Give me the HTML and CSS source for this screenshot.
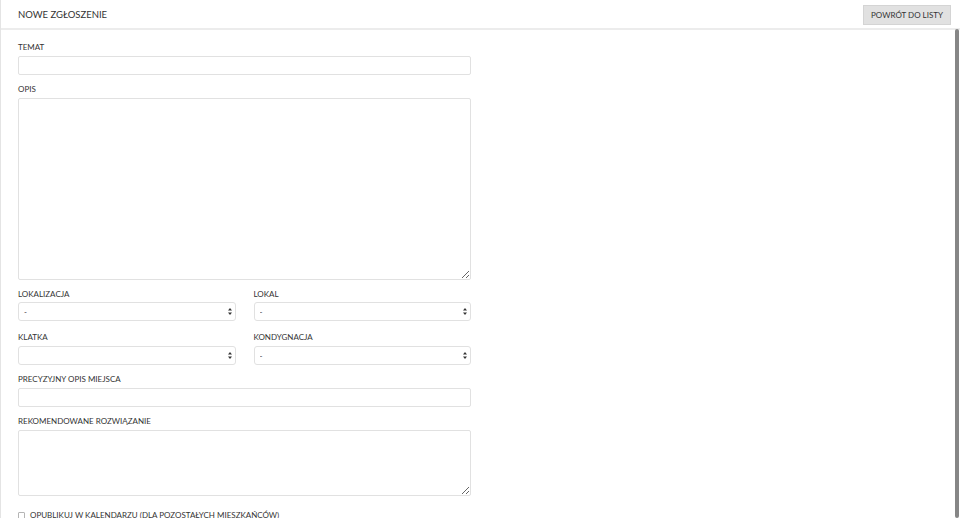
FILE: index.html
```html
<!DOCTYPE html>
<html lang="pl">
<head>
<meta charset="utf-8">
<title>Nowe zgłoszenie</title>
<link rel="stylesheet" href="styles.css">
</head>
<body>
<div class="app">
  <header class="topbar">
    <h1 class="title">NOWE ZGŁOSZENIE</h1>
    <button class="btn-back" type="button">POWRÓT DO LISTY</button>
  </header>
  <main class="content">
    <form class="form">
      <div class="field">
        <label class="label">TEMAT</label>
        <input class="input" type="text">
      </div>
      <div class="field">
        <label class="label">OPIS</label>
        <textarea class="input textarea textarea-lg"></textarea>
      </div>
      <div class="row row-first">
        <div class="field">
          <label class="label label-tight">LOKALIZACJA</label>
          <div class="select-wrap">
            <select class="input select"><option>-</option></select>
            <svg class="select-arrow" viewBox="0 0 4 7" width="4" height="7"><path d="M2 0 L4 2.6 L0 2.6 Z M0 4.4 L4 4.4 L2 7 Z" fill="#333"/></svg>
          </div>
        </div>
        <div class="field">
          <label class="label label-tight">LOKAL</label>
          <div class="select-wrap">
            <select class="input select"><option>-</option></select>
            <svg class="select-arrow" viewBox="0 0 4 7" width="4" height="7"><path d="M2 0 L4 2.6 L0 2.6 Z M0 4.4 L4 4.4 L2 7 Z" fill="#333"/></svg>
          </div>
        </div>
      </div>
      <div class="row">
        <div class="field">
          <label class="label">KLATKA</label>
          <div class="select-wrap">
            <select class="input select"><option></option></select>
            <svg class="select-arrow" viewBox="0 0 4 7" width="4" height="7"><path d="M2 0 L4 2.6 L0 2.6 Z M0 4.4 L4 4.4 L2 7 Z" fill="#333"/></svg>
          </div>
        </div>
        <div class="field">
          <label class="label">KONDYGNACJA</label>
          <div class="select-wrap">
            <select class="input select"><option>-</option></select>
            <svg class="select-arrow" viewBox="0 0 4 7" width="4" height="7"><path d="M2 0 L4 2.6 L0 2.6 Z M0 4.4 L4 4.4 L2 7 Z" fill="#333"/></svg>
          </div>
        </div>
      </div>
      <div class="field">
        <label class="label">PRECYZYJNY OPIS MIEJSCA</label>
        <input class="input" type="text">
      </div>
      <div class="field">
        <label class="label">REKOMENDOWANE ROZWIĄZANIE</label>
        <textarea class="input textarea textarea-sm"></textarea>
      </div>
      <label class="check">
        <input class="check-box" type="checkbox">
        <span>OPUBLIKUJ W KALENDARZU (DLA POZOSTAŁYCH MIESZKAŃCÓW)</span>
      </label>
    </form>
    <div class="scroll-thumb"></div>
  </main>
</div>
</body>
</html>
```

FILE: styles.css
```css
html, body {
  margin: 0;
  padding: 0;
  background: #fff;
}

body {
  font-family: Lato, "Open Sans", "Liberation Sans", sans-serif;
  color: #333;
}

.app {
  position: relative;
  height: 518px;
  overflow: hidden;
  border-left: 1px solid #e4e4e4;
  box-sizing: border-box;
}

.topbar {
  height: 28px;
  border-bottom: 2px solid #ececec;
  display: flex;
  align-items: center;
  justify-content: space-between;
  padding: 0 9px 0 17px;
}

.title {
  margin: 0;
  font-size: 9.5px;
  font-weight: 400;
  line-height: 12px;
  padding-top: 2px;
  color: #333;
}

.btn-back {
  font-family: inherit;
  font-size: 8px;
  height: 20px;
  padding: 0 7px;
  background: #e1e1e1;
  border: 1px solid #d4d4d4;
  border-radius: 0;
  color: #333;
  margin-top: 1px;
}

.content {
  padding: 12px 17px 0;
}

.form {
  width: 453px;
}

.field {
  margin-bottom: 9px;
}

.row-first .field {
  margin-bottom: 11px;
}

.label {
  display: block;
  font-size: 8px;
  line-height: 10px;
  margin-bottom: 4px;
  color: #333;
}

.label-tight {
  margin-bottom: 3px;
}

.input {
  display: block;
  box-sizing: border-box;
  width: 100%;
  height: 19px;
  margin: 0;
  border: 1px solid #e1e1e1;
  border-radius: 2px;
  padding: 0 5px;
  font-family: inherit;
  font-size: 8px;
  color: #333;
  background: #fff;
  outline: none;
}

.textarea {
  resize: vertical;
}

.textarea-lg {
  height: 182px;
}

.textarea-sm {
  height: 66px;
}

.row {
  display: grid;
  grid-template-columns: 1fr 1fr;
  column-gap: 18px;
}

.select-wrap {
  position: relative;
}

.select {
  appearance: none;
  -webkit-appearance: none;
  border-radius: 3px;
  padding-left: 5px;
}

.select-arrow {
  position: absolute;
  right: 4px;
  top: 6px;
  pointer-events: none;
}

.check {
  display: flex;
  align-items: center;
  gap: 5px;
  margin-top: 14px;
  font-size: 8px;
  line-height: 10px;
  color: #333;
}

.check-box {
  appearance: none;
  -webkit-appearance: none;
  width: 7px;
  height: 7px;
  margin: 0;
  border: 1px solid #b5b5b5;
  border-radius: 1px;
  background: #fff;
}

.scroll-thumb {
  position: absolute;
  right: 1px;
  top: 29px;
  bottom: 0;
  width: 4px;
  border-radius: 2px;
  background: #868686;
}
```
